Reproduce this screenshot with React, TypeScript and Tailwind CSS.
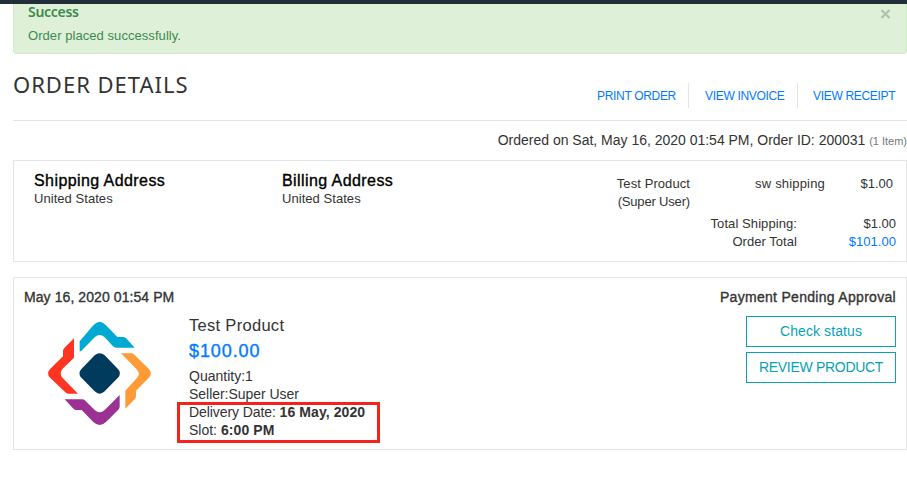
import type { ReactNode } from "react";

const medium = "[-webkit-text-stroke:0.35px_currentColor]";

function ProductLogo() {
  return (
    <svg viewBox="0 0 360 345" className="h-[115px] w-[120px] shrink-0" aria-hidden="true">
      <path fill="#00a9d2" d="M119 109V79L160 31Q179 10 198 31L232 66H250Q256 66 260 71L284 98H229Q223 98 219 94L194 67Q179 53 164 67L123 109Z" />
      <path fill="#ff3421" d="M102 70V128L68 161Q56 175 68 189L114 236H85Q80 236 76 232L31 189Q17 175 31 161L69 124V108Q69 103 73 99Z" />
      <path fill="#ff9b36" d="M243 115H275Q279 115 283 119L326 161Q340 175 326 189L288 227V244Q288 249 284 253L256 281V227L290 190Q303 176 290 163Z" />
      <path fill="#9b3293" d="M74 253H126Q132 253 136 257L164 285Q179 299 194 285L239 240V276Q239 280 235 284L198 321Q179 339 160 321L125 285H108Q103 285 99 280Z" />
      <path fill="#003a5c" d="M164 121Q179 109 194 121L233 161Q247 175 233 189L194 229Q179 243 164 229L125 189Q111 175 125 161Z" />
    </svg>
  );
}

function ActionLink({ children, className }: { children: ReactNode; className: string }) {
  return (
    <a href="#" className={`h-[25px] whitespace-nowrap text-[12px] leading-[27px] tracking-[-0.32px] text-[#007bff] ${className}`}>
      {children}
    </a>
  );
}

function OutlineButton({ children, className }: { children: ReactNode; className: string }) {
  return (
    <button className={`h-[31px] w-[150px] whitespace-nowrap border border-[#06a2b6] text-[14px] leading-[29px] text-[#06a2b6] ${className}`}>
      {children}
    </button>
  );
}

function Address({ title, className }: { title: string; className: string }) {
  return (
    <div className={className}>
      <h2 className={`text-[16px] leading-[20px] tracking-[0.42px] text-black ${medium}`}>{title}</h2>
      <p className="text-[13px] leading-[16px] tracking-[0.05px]">United States</p>
    </div>
  );
}

export default function App() {
  return (
    <div className="h-[483px] w-[907px] overflow-hidden bg-white font-['Liberation_Sans',Arial,sans-serif] text-[#333333]">
      <div className="h-1 bg-[#222f38]" />
      <div className="ml-[13px]">
        <div className="flex h-[50px] justify-between rounded-b border border-t-0 border-[#d0e9c6] bg-[#dff0d8] pl-[14px] pr-[15px] text-[#3c8a50]">
          <div>
            <h4 className="-mt-px font-['Noto_Sans',sans-serif] text-[14px] font-semibold leading-[18px] tracking-[-0.3px]">Success</h4>
            <p className="mt-[6px] text-[13px] leading-[18px] tracking-[0.06px]">Order placed successfully.</p>
          </div>
          <button aria-label="Close" className="mt-[5px] h-[10px] w-[11px]">
            <svg viewBox="0 0 11 10" className="h-[10px] w-[11px]" stroke="#b1c2ac" strokeWidth="2.2">
              <path d="M1.5 1L9.5 9M9.5 1L1.5 9" />
            </svg>
          </button>
        </div>

        <header className="flex h-[67px] justify-between border-b border-[#e5e5e5]">
          <h1 className="pt-[15px] font-['Noto_Sans',sans-serif] text-[22px] font-normal leading-[30px] tracking-[1px]">ORDER DETAILS</h1>
          <nav className="flex pt-[29px]">
            <ActionLink className="w-[92px] border-r border-[#e5e5e5]">PRINT ORDER</ActionLink>
            <ActionLink className="w-[109px] border-r border-[#e5e5e5] pl-[16px]">VIEW INVOICE</ActionLink>
            <ActionLink className="w-[109px] pl-[15px]">VIEW RECEIPT</ActionLink>
          </nav>
        </header>

        <p className="pt-[10px] text-right text-[14px] leading-[19px] tracking-[-0.01px]">
          Ordered on Sat, May 16, 2020 01:54 PM, Order ID: 200031 <span className="text-[11px] text-[#777777]">(1 Item)</span>
        </p>

        <section className="mt-[9px] flex h-[102px] border border-[#e5e5e5] pl-[20px]">
          <Address title="Shipping Address" className="w-[248px] pt-[10px]" />
          <Address title="Billing Address" className="flex-1 pt-[10px]" />
          <div className="w-[293px] pr-[10px] pt-[14px] text-right text-[13px] leading-[18px]">
            <div className="flex">
              <p className="w-[77px]">
                <span className="tracking-[0.08px]">Test Product</span>
                <br />
                <span className="tracking-[-0.17px]">(Super User)</span>
              </p>
              <p className="w-[135px] tracking-[0.18px]">sw shipping</p>
              <p className="flex-1 pr-[3px]">$1.00</p>
            </div>
            <div className="mt-[4px] flex">
              <p className="w-[184px] tracking-[0.08px]">Total Shipping:</p>
              <p className="flex-1">$1.00</p>
            </div>
            <div className="flex">
              <p className="w-[184px] tracking-[0.05px]">Order Total</p>
              <p className="flex-1 tracking-[0.05px] text-[#007bff]">$101.00</p>
            </div>
          </div>
        </section>

        <section className="mt-[15px] h-[173px] border border-[#e5e5e5] pl-[10px] pr-[10px]">
          <div className={`flex justify-between pt-[10px] text-[14px] leading-[18px] ${medium}`}>
            <p className="tracking-[0.08px]">May 16, 2020 01:54 PM</p>
            <p className="tracking-[0.3px]">Payment Pending Approval</p>
          </div>
          <div className="flex">
            <div className="w-[165px] pl-[16px] pt-[9px]">
              <ProductLogo />
            </div>
            <div className="flex-1 pt-[9px] text-[14px] leading-[18px]">
              <h3 className="text-[16.5px] leading-[20px] tracking-[0.3px]">Test Product</h3>
              <p className={`mt-[3px] text-[18px] leading-[26px] tracking-[0.9px] text-[#007bff] ${medium}`}>$100.00</p>
              <p className="mt-[3px]">Quantity:1</p>
              <p className="tracking-[-0.03px]">Seller:Super User</p>
              <div className="-ml-[12px] -mt-px h-[41px] w-[203px] border-[3px] border-[#f8201b] pl-[9px]">
                <p className="-mt-[2px]"><span className="tracking-[-0.08px]">Delivery Date: </span><b className="tracking-[0.08px]">16 May, 2020</b></p>
                <p>Slot: <b className="tracking-[0.08px]">6:00 PM</b></p>
              </div>
            </div>
            <div className="flex flex-col gap-[5px] pt-[10px]">
              <OutlineButton className="tracking-[0.1px]">Check status</OutlineButton>
              <OutlineButton className="tracking-[-0.3px]">REVIEW PRODUCT</OutlineButton>
            </div>
          </div>
        </section>
      </div>
    </div>
  );
}
